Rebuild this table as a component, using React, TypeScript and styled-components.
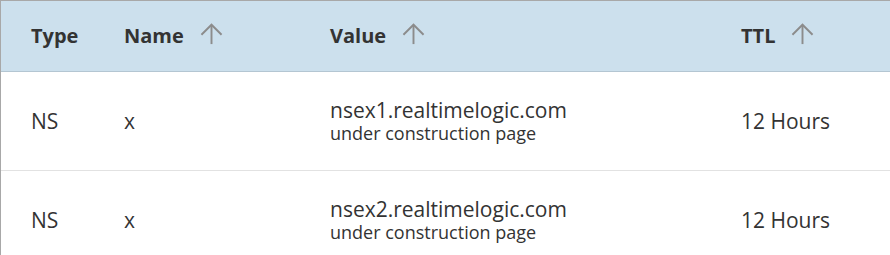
import React from "react";
import styled, { createGlobalStyle } from "styled-components";

const GlobalStyle = createGlobalStyle`
  html, body {
    margin: 0;
    padding: 0;
    background: #fff;
    font-family: "Open Sans", "Noto Sans", sans-serif;
    color: #333;
  }
`;

type DnsRecord = {
  type: string;
  name: string;
  value: string;
  note: string;
  ttl: string;
};

const records: DnsRecord[] = [
  {
    type: "NS",
    name: "x",
    value: "nsex1.realtimelogic.com",
    note: "under construction page",
    ttl: "12 Hours",
  },
  {
    type: "NS",
    name: "x",
    value: "nsex2.realtimelogic.com",
    note: "under construction page",
    ttl: "12 Hours",
  },
];

const SortArrow = () => (
  <ArrowIcon viewBox="0 0 24 24" aria-hidden="true">
    <polyline points="1.5,12.3 12,1.8 22.5,12.3" />
    <line x1="12" y1="2" x2="12" y2="22" />
  </ArrowIcon>
);

const App = () => (
  <>
    <GlobalStyle />
    <Frame>
      <Table>
        <colgroup>
          <col style={{ width: 93 }} />
          <col style={{ width: 206 }} />
          <col style={{ width: 411 }} />
          <col />
        </colgroup>
        <thead>
          <HeadRow>
            <HeadCell>Type</HeadCell>
            <HeadCell>
              <HeadLabel>
                Name
                <SortArrow />
              </HeadLabel>
            </HeadCell>
            <HeadCell>
              <HeadLabel>
                Value
                <SortArrow />
              </HeadLabel>
            </HeadCell>
            <HeadCell>
              <HeadLabel>
                TTL
                <SortArrow />
              </HeadLabel>
            </HeadCell>
          </HeadRow>
        </thead>
        <tbody>
          {records.map((r) => (
            <Row key={r.value}>
              <Cell>{r.type}</Cell>
              <Cell>{r.name}</Cell>
              <Cell>
                <Value>{r.value}</Value>
                <Note>{r.note}</Note>
              </Cell>
              <Cell>{r.ttl}</Cell>
            </Row>
          ))}
        </tbody>
      </Table>
    </Frame>
  </>
);

const Frame = styled.div`
  width: 889px;
  border-top: 1px solid #a8a8a8;
  border-left: 1px solid #a8a8a8;
`;

const Table = styled.table`
  width: 100%;
  table-layout: fixed;
  border-collapse: collapse;
`;

const HeadRow = styled.tr`
  height: 70px;
  background: #cce0ed;
  border-bottom: 1px solid #b4c6d2;
`;

const HeadCell = styled.th`
  padding: 0 30px;
  text-align: left;
  font-size: 20px;
  font-weight: 700;
  color: #333;
  white-space: nowrap;
`;

const HeadLabel = styled.span`
  display: inline-flex;
  align-items: center;
  gap: 16px;
`;

const ArrowIcon = styled.svg`
  width: 23px;
  height: 23px;
  fill: none;
  stroke: #8c8c8c;
  stroke-width: 2;
  margin-top: -2px;
`;

const Row = styled.tr`
  height: 99px;
  border-bottom: 1px solid #e2e2e2;
`;

const Cell = styled.td`
  padding: 0 30px;
  font-size: 21px;
  color: #333;
  vertical-align: middle;
  white-space: nowrap;
`;

const Value = styled.div`
  font-size: 21px;
  line-height: 25px;
`;

const Note = styled.div`
  font-size: 18px;
  line-height: 21px;
`;

export default App;
